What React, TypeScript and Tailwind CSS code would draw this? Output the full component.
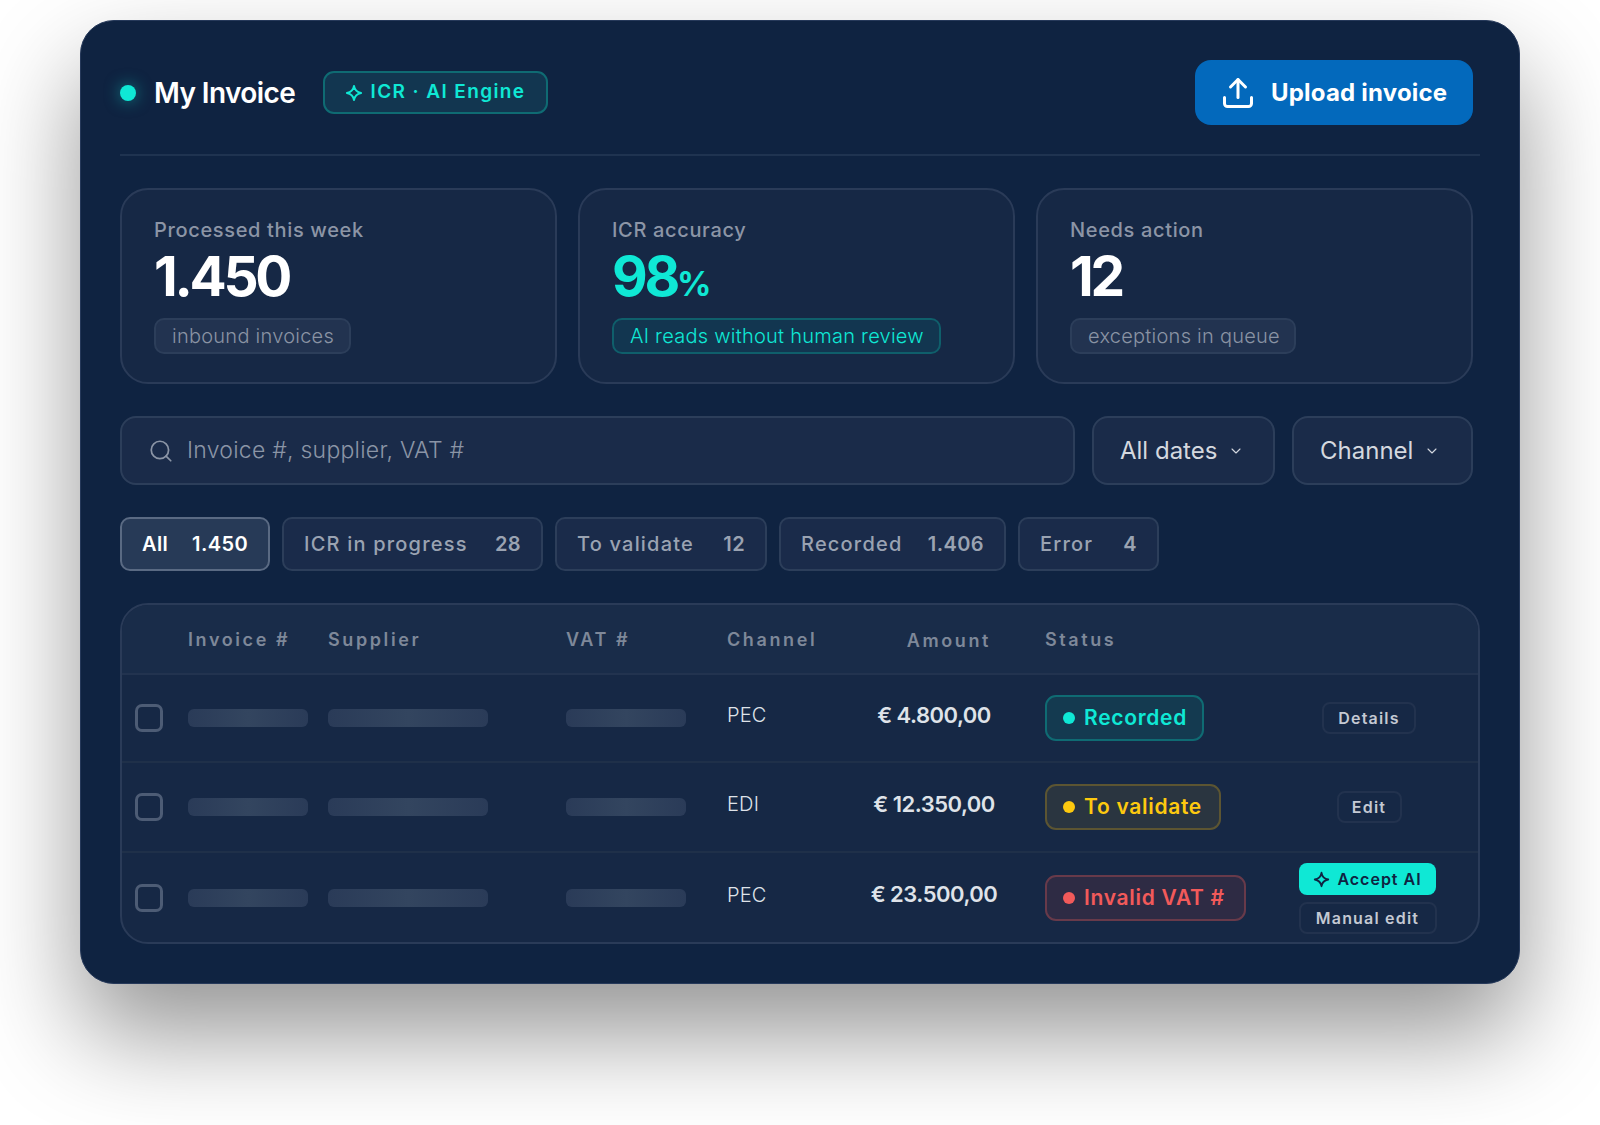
import { ChevronDown, Search, Upload } from "lucide-react";

const font = { fontFamily: "Inter, 'Liberation Sans', sans-serif" };

const Sparkle = ({ className }: { className: string }) => (
  <svg viewBox="0 0 24 24" fill="none" stroke="currentColor" strokeWidth={2.6} strokeLinejoin="round" className={className}>
    <path d="M12 2.5C12.8 7.6 16.2 11 21.5 12C16.2 13 12.8 16.4 12 21.5C11.2 16.4 7.8 13 2.5 12C7.8 11 11.2 7.6 12 2.5Z" />
  </svg>
);

const stats = [
  { label: "Processed this week", value: "1.450", note: "inbound invoices", noteWidth: "w-[197px]" },
  { label: "ICR accuracy", value: "98", suffix: "%", note: "AI reads without human review", noteWidth: "w-[329px]", teal: true },
  { label: "Needs action", value: "12", note: "exceptions in queue", noteWidth: "w-[226px]" },
];

const tabs = [
  { label: "All", count: "1.450", width: "w-[150px]", active: true },
  { label: "ICR in progress", count: "28", width: "w-[261px]" },
  { label: "To validate", count: "12", width: "w-[212px]" },
  { label: "Recorded", count: "1.406", width: "w-[227px]" },
  { label: "Error", count: "4", width: "w-[141px]" },
];

const columns = "grid grid-cols-[66px_140px_238px_161px_129px_156px_248px_218px]";

const Bar = ({ width }: { width: string }) => (
  <div className={`${width} h-[18px] rounded-[6px] bg-gradient-to-r from-[#2a3b58] via-[#33455f] to-[#2a3b58]`} />
);

const StatusPill = ({ label, width, tone }: { label: string; width: string; tone: string }) => {
  const tones: Record<string, string> = {
    teal: "bg-[#143a50] border-[#0f6b73] text-[#0fe8d5]",
    yellow: "bg-[#2a3540] border-[#5c5532] text-[#fdc90f]",
    red: "bg-[#2e2b44] border-[#683a4a] text-[#f25a5a]",
  };
  const dots: Record<string, string> = {
    teal: "bg-[#0fe8d5]",
    yellow: "bg-[#fdc90f]",
    red: "bg-[#f25a5a]",
  };
  return (
    <div className={`${width} ${tones[tone]} h-[46px] rounded-[11px] border-2 flex items-center pl-[16px] gap-[9px] text-[21px] font-semibold tracking-[0.7px]`}>
      <span className={`${dots[tone]} w-[12px] h-[12px] rounded-full shrink-0`} />
      {label}
    </div>
  );
};

const GhostButton = ({ label, width }: { label: string; width: string }) => (
  <button className={`${width} h-[32px] rounded-[8px] border-2 border-[#22324e] text-[16px] font-semibold tracking-[1.2px] text-[#c4c9d3] flex items-center justify-center`}>
    {label}
  </button>
);

const rows = [
  { channel: "PEC", amount: "€ 4.800,00", status: "Recorded", statusWidth: "w-[159px]", tone: "teal", rowHeight: "h-[88px]" },
  { channel: "EDI", amount: "€ 12.350,00", status: "To validate", statusWidth: "w-[176px]", tone: "yellow", rowHeight: "h-[90px]" },
  { channel: "PEC", amount: "€ 23.500,00", status: "Invalid VAT #", statusWidth: "w-[201px]", tone: "red", rowHeight: "h-[89px]" },
];

export default function App() {
  return (
    <div style={font} className="w-[1600px] h-[1125px] overflow-hidden bg-white flex justify-center items-start pt-[20px]">
      <div className="w-[1440px] h-[964px] rounded-[34px] bg-[#0f2341] border border-[#26395a] shadow-[0_50px_100px_rgba(0,0,0,0.42)] pt-[39px] pl-[39px] flex flex-col">
        {/* header */}
        <div className="w-[1353px] h-[65px] flex items-center">
          <span className="w-[16px] h-[16px] rounded-full bg-[#0fe8d5] shadow-[0_0_16px_rgba(15,232,213,0.5)]" />
          <h1 className="ml-[18px] text-[28px] font-semibold tracking-[-0.6px] text-white w-[169px] whitespace-nowrap">My Invoice</h1>
          <div className="w-[225px] h-[43px] rounded-[11px] border-2 border-[#0f6b73] bg-[#123650] text-[#0fe8d5] flex items-center justify-center gap-[7px] text-[19px] font-semibold tracking-[1.4px]">
            <Sparkle className="w-[18px] h-[18px]" />
            ICR · AI Engine
          </div>
          <button className="ml-auto w-[278px] h-[65px] rounded-[16px] bg-[#0369bc] text-white flex items-center pl-[25px] gap-[15px] text-[24px] font-bold tracking-[0.2px]">
            <Upload size={36} strokeWidth={2} />
            Upload invoice
          </button>
        </div>

        <div className="w-[1360px] h-[2px] mt-[29px] bg-[#1f3350]" />

        {/* stat cards */}
        <div className="w-[1353px] mt-[32px] grid grid-cols-3 gap-[21px]">
          {stats.map((s) => (
            <div key={s.label} className="h-[196px] rounded-[28px] border-2 border-[#2a3b58] bg-[#162845] pl-[32px] pt-[28px]">
              <div className="h-[24px] leading-[24px] text-[20px] font-medium tracking-[0.65px] text-[#8c95a6]">{s.label}</div>
              <div className={`mt-[6px] h-[56px] leading-[56px] text-[55px] font-bold tracking-[-3.3px] ${s.teal ? "text-[#0fe8d5]" : "text-white"}`}>
                {s.value}
                {s.suffix && <span className="text-[34px] tracking-normal">{s.suffix}</span>}
              </div>
              <div className={`${s.noteWidth} mt-[14px] h-[36px] rounded-[10px] border-2 pl-[16px] flex items-center text-[20px] font-light tracking-[0.25px] ${s.teal ? "bg-[#123650] border-[#0f5f6b] text-[#0fe8d5]" : "bg-[#223350] border-[#2c3e5a] text-[#8a93a4]"}`}>
                {s.note}
              </div>
            </div>
          ))}
        </div>

        {/* search and filters */}
        <div className="w-[1353px] mt-[32px] flex gap-[17px] h-[69px]">
          <div className="flex-1 rounded-[16px] border-2 border-[#2c3e5a] bg-[#1a2b49] flex items-center pl-[26px] gap-[13px] text-[23px] font-light tracking-[0.25px] text-[#8b95a6]">
            <Search size={26} strokeWidth={1.6} />
            Invoice #, supplier, VAT #
          </div>
          <button className="w-[183px] rounded-[16px] border-2 border-[#2c3e5a] bg-[#1a2b49] flex items-center pl-[26px] gap-[11px] text-[24px] font-normal text-[#d4d8df]">
            All dates
            <ChevronDown size={16} strokeWidth={1.6} />
          </button>
          <button className="w-[181px] rounded-[16px] border-2 border-[#2c3e5a] bg-[#1a2b49] flex items-center pl-[26px] gap-[11px] text-[24px] font-normal text-[#d4d8df]">
            Channel
            <ChevronDown size={16} strokeWidth={1.6} />
          </button>
        </div>

        {/* status tabs */}
        <div className="mt-[32px] flex gap-[12px] h-[54px]">
          {tabs.map((t) => (
            <div
              key={t.label}
              className={`${t.width} rounded-[10px] border-2 flex items-center justify-between px-[20px] text-[20px] ${
                t.active ? "bg-[#273a57] border-[#5a6a83] text-white font-semibold" : "bg-[#1a2b4a] border-[#2c3e5a] text-[#9aa3b2] font-medium"
              }`}
            >
              <span className={t.active ? "tracking-[0.4px]" : "tracking-[1.2px]"}>{t.label}</span>
              <span className="font-semibold tracking-[0.4px]">{t.count}</span>
            </div>
          ))}
        </div>

        {/* table */}
        <div className="w-[1360px] h-[341px] mt-[32px] rounded-[28px] border-2 border-[#2a3b58] bg-[#162845] overflow-hidden">
          <div className={`${columns} h-[70px] bg-[#192c49] border-b-2 border-[#22334f] items-center text-[18px] font-semibold tracking-[2.6px] text-[#7e8899]`}>
            <span />
            <span>Invoice #</span>
            <span>Supplier</span>
            <span>VAT #</span>
            <span>Channel</span>
            <span className="text-right pr-[21px] pt-[2px]">Amount</span>
            <span className="pl-[33px]">Status</span>
            <span />
          </div>
          {rows.map((r, i) => (
            <div key={r.status} className={`${columns} ${r.rowHeight} items-center ${i < 2 ? "border-b-2 border-[#1f3049]" : ""}`}>
              <div className="pl-[13px]">
                <div className="w-[28px] h-[28px] rounded-[7px] border-[3px] border-[#4d5c75]" />
              </div>
              <Bar width="w-[120px]" />
              <Bar width="w-[160px]" />
              <Bar width="w-[120px]" />
              <span className="pb-[6px] text-[20px] font-light tracking-[0.2px] text-[#dfe3e9]">{r.channel}</span>
              <span className="pb-[6px] text-center text-[22px] font-semibold tracking-[-0.5px] text-[#dfe3e9] whitespace-nowrap">{r.amount}</span>
              <div className="pl-[33px]">
                <StatusPill label={r.status} width={r.statusWidth} tone={r.tone} />
              </div>
              <div className={`flex flex-col items-center gap-[7px] ${i === 2 ? "pr-[3px] pt-[2px]" : ""}`}>
                {i === 0 && <GhostButton label="Details" width="w-[94px]" />}
                {i === 1 && <GhostButton label="Edit" width="w-[65px]" />}
                {i === 2 && (
                  <>
                    <button className="w-[137px] h-[32px] rounded-[8px] bg-[#0fe8d5] text-[#0f2341] text-[16px] font-semibold tracking-[1px] flex items-center justify-center gap-[7px]">
                      <Sparkle className="w-[17px] h-[17px]" />
                      Accept AI
                    </button>
                    <GhostButton label="Manual edit" width="w-[138px]" />
                  </>
                )}
              </div>
            </div>
          ))}
        </div>
      </div>
    </div>
  );
}
